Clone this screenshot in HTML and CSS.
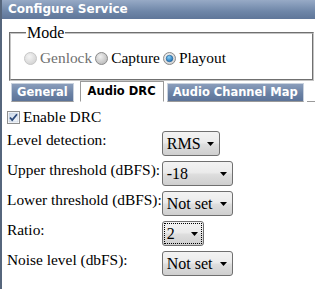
FILE: index.html
```html
<!DOCTYPE html>
<html>
<head>
<meta charset="utf-8">
<link rel="stylesheet" href="styles.css">
</head>
<body>
<div class="window">
  <div class="titlebar">Configure Service</div>
  <div class="content">
    <fieldset class="mode">
      <legend>Mode</legend>
      <div class="radios">
        <label class="radio disabled"><svg width="13" height="13" viewBox="0 0 13 13"><defs><radialGradient id="rg1" cx="0.4" cy="0.35" r="0.7"><stop offset="0" stop-color="#f4f4f4"/><stop offset="1" stop-color="#d2d2d2"/></radialGradient></defs><circle cx="6.5" cy="6.5" r="6" fill="url(#rg1)" stroke="#c6c6c6"/></svg>Genlock</label>
        <label class="radio"><svg width="13" height="13" viewBox="0 0 13 13"><defs><radialGradient id="rg2" cx="0.4" cy="0.35" r="0.7"><stop offset="0" stop-color="#f0f0f0"/><stop offset="1" stop-color="#b8b8b8"/></radialGradient></defs><circle cx="6.5" cy="6.5" r="6" fill="url(#rg2)" stroke="#8a8a8a"/></svg>Capture</label>
        <label class="radio"><svg width="13" height="13" viewBox="0 0 13 13"><defs><radialGradient id="rg3" cx="0.4" cy="0.35" r="0.7"><stop offset="0" stop-color="#f6f6f6"/><stop offset="1" stop-color="#cfcfcf"/></radialGradient><radialGradient id="rg4" cx="0.4" cy="0.3" r="0.7"><stop offset="0" stop-color="#8ad0f5"/><stop offset="1" stop-color="#1c6fb8"/></radialGradient></defs><circle cx="6.5" cy="6.5" r="6" fill="url(#rg3)" stroke="#8a8a8a"/><circle cx="6.5" cy="6.5" r="3.3" fill="url(#rg4)" stroke="#1d5a8e" stroke-width="0.6"/></svg>Playout</label>
      </div>
    </fieldset>
    <div class="tabs">
      <div class="tab">General</div>
      <div class="tab active">Audio DRC</div>
      <div class="tab">Audio Channel Map</div>
      <div class="tabfill"></div>
    </div>
    <div class="panel">
      <label class="check"><svg width="13" height="13" viewBox="0 0 13 13"><defs><linearGradient id="cg" x1="0" y1="0" x2="1" y2="1"><stop offset="0" stop-color="#cbd8e8"/><stop offset="1" stop-color="#f4f7fb"/></linearGradient></defs><rect x="0.5" y="0.5" width="12" height="12" fill="#fff" stroke="#8e8f8f"/><rect x="2" y="2" width="9" height="9" fill="url(#cg)" stroke="#b5c3d6" stroke-width="0.5"/><path d="M3 6.5 L5.2 9 L10 3.2" fill="none" stroke="#2c4a7a" stroke-width="1.8"/></svg>Enable DRC</label>
      <div class="form">
        <div class="lbl">Level detection:</div>
        <div class="select w58"><span>RMS</span><svg width="7" height="4" viewBox="0 0 7 4"><path d="M0 0H7L3.5 4Z" fill="#000"/></svg></div>
        <div class="lbl">Upper threshold (dBFS):</div>
        <div class="select w71"><span>-18</span><svg width="7" height="4" viewBox="0 0 7 4"><path d="M0 0H7L3.5 4Z" fill="#000"/></svg></div>
        <div class="lbl">Lower threshold (dBFS):</div>
        <div class="select w71"><span>Not set</span><svg width="7" height="4" viewBox="0 0 7 4"><path d="M0 0H7L3.5 4Z" fill="#000"/></svg></div>
        <div class="lbl">Ratio:</div>
        <div class="select w42 focus"><span>2</span><svg width="7" height="4" viewBox="0 0 7 4"><path d="M0 0H7L3.5 4Z" fill="#000"/></svg></div>
        <div class="lbl">Noise level (dbFS):</div>
        <div class="select w71"><span>Not set</span><svg width="7" height="4" viewBox="0 0 7 4"><path d="M0 0H7L3.5 4Z" fill="#000"/></svg></div>
      </div>
    </div>
  </div>
</div>
</body>
</html>
```

FILE: styles.css
```css
html, body {
  margin: 0;
  padding: 0;
  background: #fff;
}
.window {
  width: 315px;
  height: 289px;
  border-left: 2px solid #56667c;
  box-sizing: border-box;
  font-family: "Liberation Serif", serif;
  font-size: 15.4px;
  color: #000;
  overflow: hidden;
}
.titlebar {
  height: 19px;
  margin-left: -2px;
  padding-left: 8px;
  background: linear-gradient(#97aac6, #6e86a8 60%, #5f7699);
  color: #fff;
  font-family: "DejaVu Sans", sans-serif;
  font-weight: bold;
  font-size: 12px;
  line-height: 19px;
}
.content {
  padding-top: 5px;
}
.mode {
  margin: 0 1px 0 7px;
  padding: 0 0 10px 13px;
  border: 2px groove #c4c4c4;
}
.mode legend {
  padding: 0 1px;
  margin-left: 2px;
  line-height: 18px;
  font-size: 16px;
}
.radios {
  display: flex;
  align-items: center;
  height: 22px;
  margin-top: 5px;
}
.radio {
  display: flex;
  align-items: center;
  gap: 3px;
  margin-right: 3px;
}
.radio.disabled {
  color: #6f6f6f;
}
.tabs {
  display: flex;
  align-items: flex-end;
  margin-top: 0;
  height: 21px;
  padding-left: 9px;
}
.tab {
  height: 19px;
  box-sizing: border-box;
  padding: 0 5px;
  margin-right: 3px;
  background: linear-gradient(#8a9dbb, #6b82a5 55%, #5c7398);
  border: 1px solid #c9d2de;
  border-bottom: 1px solid #9a9a9a;
  color: #fff;
  font-family: "DejaVu Sans", sans-serif;
  font-weight: bold;
  font-size: 11.5px;
  line-height: 17px;
  white-space: nowrap;
}
.tab.active {
  height: 21px;
  background: #fff;
  color: #000;
  border: 1px solid #9a9a9a;
  border-bottom: 1px solid #fff;
  padding: 0 7px;
  margin-left: 3px;
  line-height: 19px;
}
.tabfill {
  flex: 1;
  height: 0;
  border-bottom: 1px solid #9a9a9a;
}
.panel {
  padding: 6px 0 0 5px;
}
.check {
  display: flex;
  align-items: center;
  gap: 3px;
  height: 18px;
}
.form {
  display: grid;
  grid-template-columns: auto auto;
  column-gap: 0;
  row-gap: 5px;
  margin-top: 5px;
  justify-content: start;
  justify-items: start;
}
.lbl {
  line-height: 18px;
  white-space: nowrap;
}
.select {
  height: 25px;
  box-sizing: border-box;
  border: 1px solid #707070;
  border-radius: 3px;
  background: linear-gradient(#f3f3f3, #ebebeb 45%, #dddddd 55%, #cfcfcf);
  display: flex;
  align-items: center;
  justify-content: space-between;
  padding: 0 5px 0 4px;
  line-height: 18px;
  position: relative;
  white-space: nowrap;
  font-size: 16px;
}
.select svg {
  margin-top: 1px;
}
.w58 { width: 58px; }
.w71 { width: 71px; }
.w42 { width: 42px; }
.focus::after {
  content: "";
  position: absolute;
  inset: 1px;
  border: 1px dotted #000;
}
```
